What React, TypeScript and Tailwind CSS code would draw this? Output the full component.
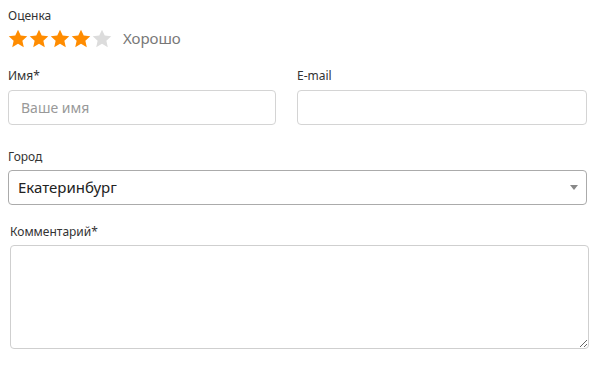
import React from "react";

const Star = ({ on }: { on: boolean }) => (
  <svg width="20" height="19" viewBox="0 0 24 23" className="block">
    <path
      d="M12 0.8l3.3 7.2 7.9 0.9-5.9 5.3 1.7 7.8L12 18l-7 4 1.7-7.8L0.8 8.9l7.9-0.9z"
      fill={on ? "#ff8c00" : "#dcdcdc"}
    />
  </svg>
);

export default function App() {
  return (
    <div
      className="w-[602px] h-[385px] bg-white text-[#333] px-[8px] pt-[8px]"
      style={{ fontFamily: '"Noto Sans", "Open Sans", sans-serif' }}
    >
      <div className="text-[12px] leading-[16px]">Оценка</div>
      <div className="flex items-center mt-[4px] h-[20px]">
        <div className="flex gap-[1px]">
          <Star on />
          <Star on />
          <Star on />
          <Star on />
          <Star on={false} />
        </div>
        <span className="ml-[11px] text-[15px] text-[#777] leading-[20px]">Хорошо</span>
      </div>

      <div className="grid grid-cols-[268px_290px] gap-x-[21px] mt-[20px]">
        <div>
          <div className="text-[12px] leading-[16px]">Имя*</div>
          <input
            placeholder="Ваше имя"
            className="mt-[6px] w-full h-[35px] border border-[#d4d4d4] rounded-[4px] px-[12px] text-[14px] placeholder:text-[#999] outline-none"
          />
        </div>
        <div>
          <div className="text-[12px] leading-[16px]">E-mail</div>
          <input className="mt-[6px] w-full h-[35px] border border-[#d4d4d4] rounded-[4px] px-[12px] text-[14px] outline-none" />
        </div>
      </div>

      <div className="mt-[24px] text-[12px] leading-[16px]">Город</div>
      <div className="mt-[5px] w-[579px] h-[35px] border border-[#ababab] rounded-[4px] flex items-center justify-between pl-[9px] pr-[8px]">
        <span className="text-[15px] text-[#222]">Екатеринбург</span>
        <span className="w-0 h-0 border-l-[4px] border-r-[4px] border-t-[5px] border-l-transparent border-r-transparent border-t-[#888]" />
      </div>

      <div className="ml-[2px] mt-[19px] text-[12px] leading-[16px]">Комментарий*</div>
      <textarea className="block ml-[2px] mt-[5px] w-[579px] h-[104px] border border-[#cfcfcf] rounded-[4px] outline-none" />
    </div>
  );
}
